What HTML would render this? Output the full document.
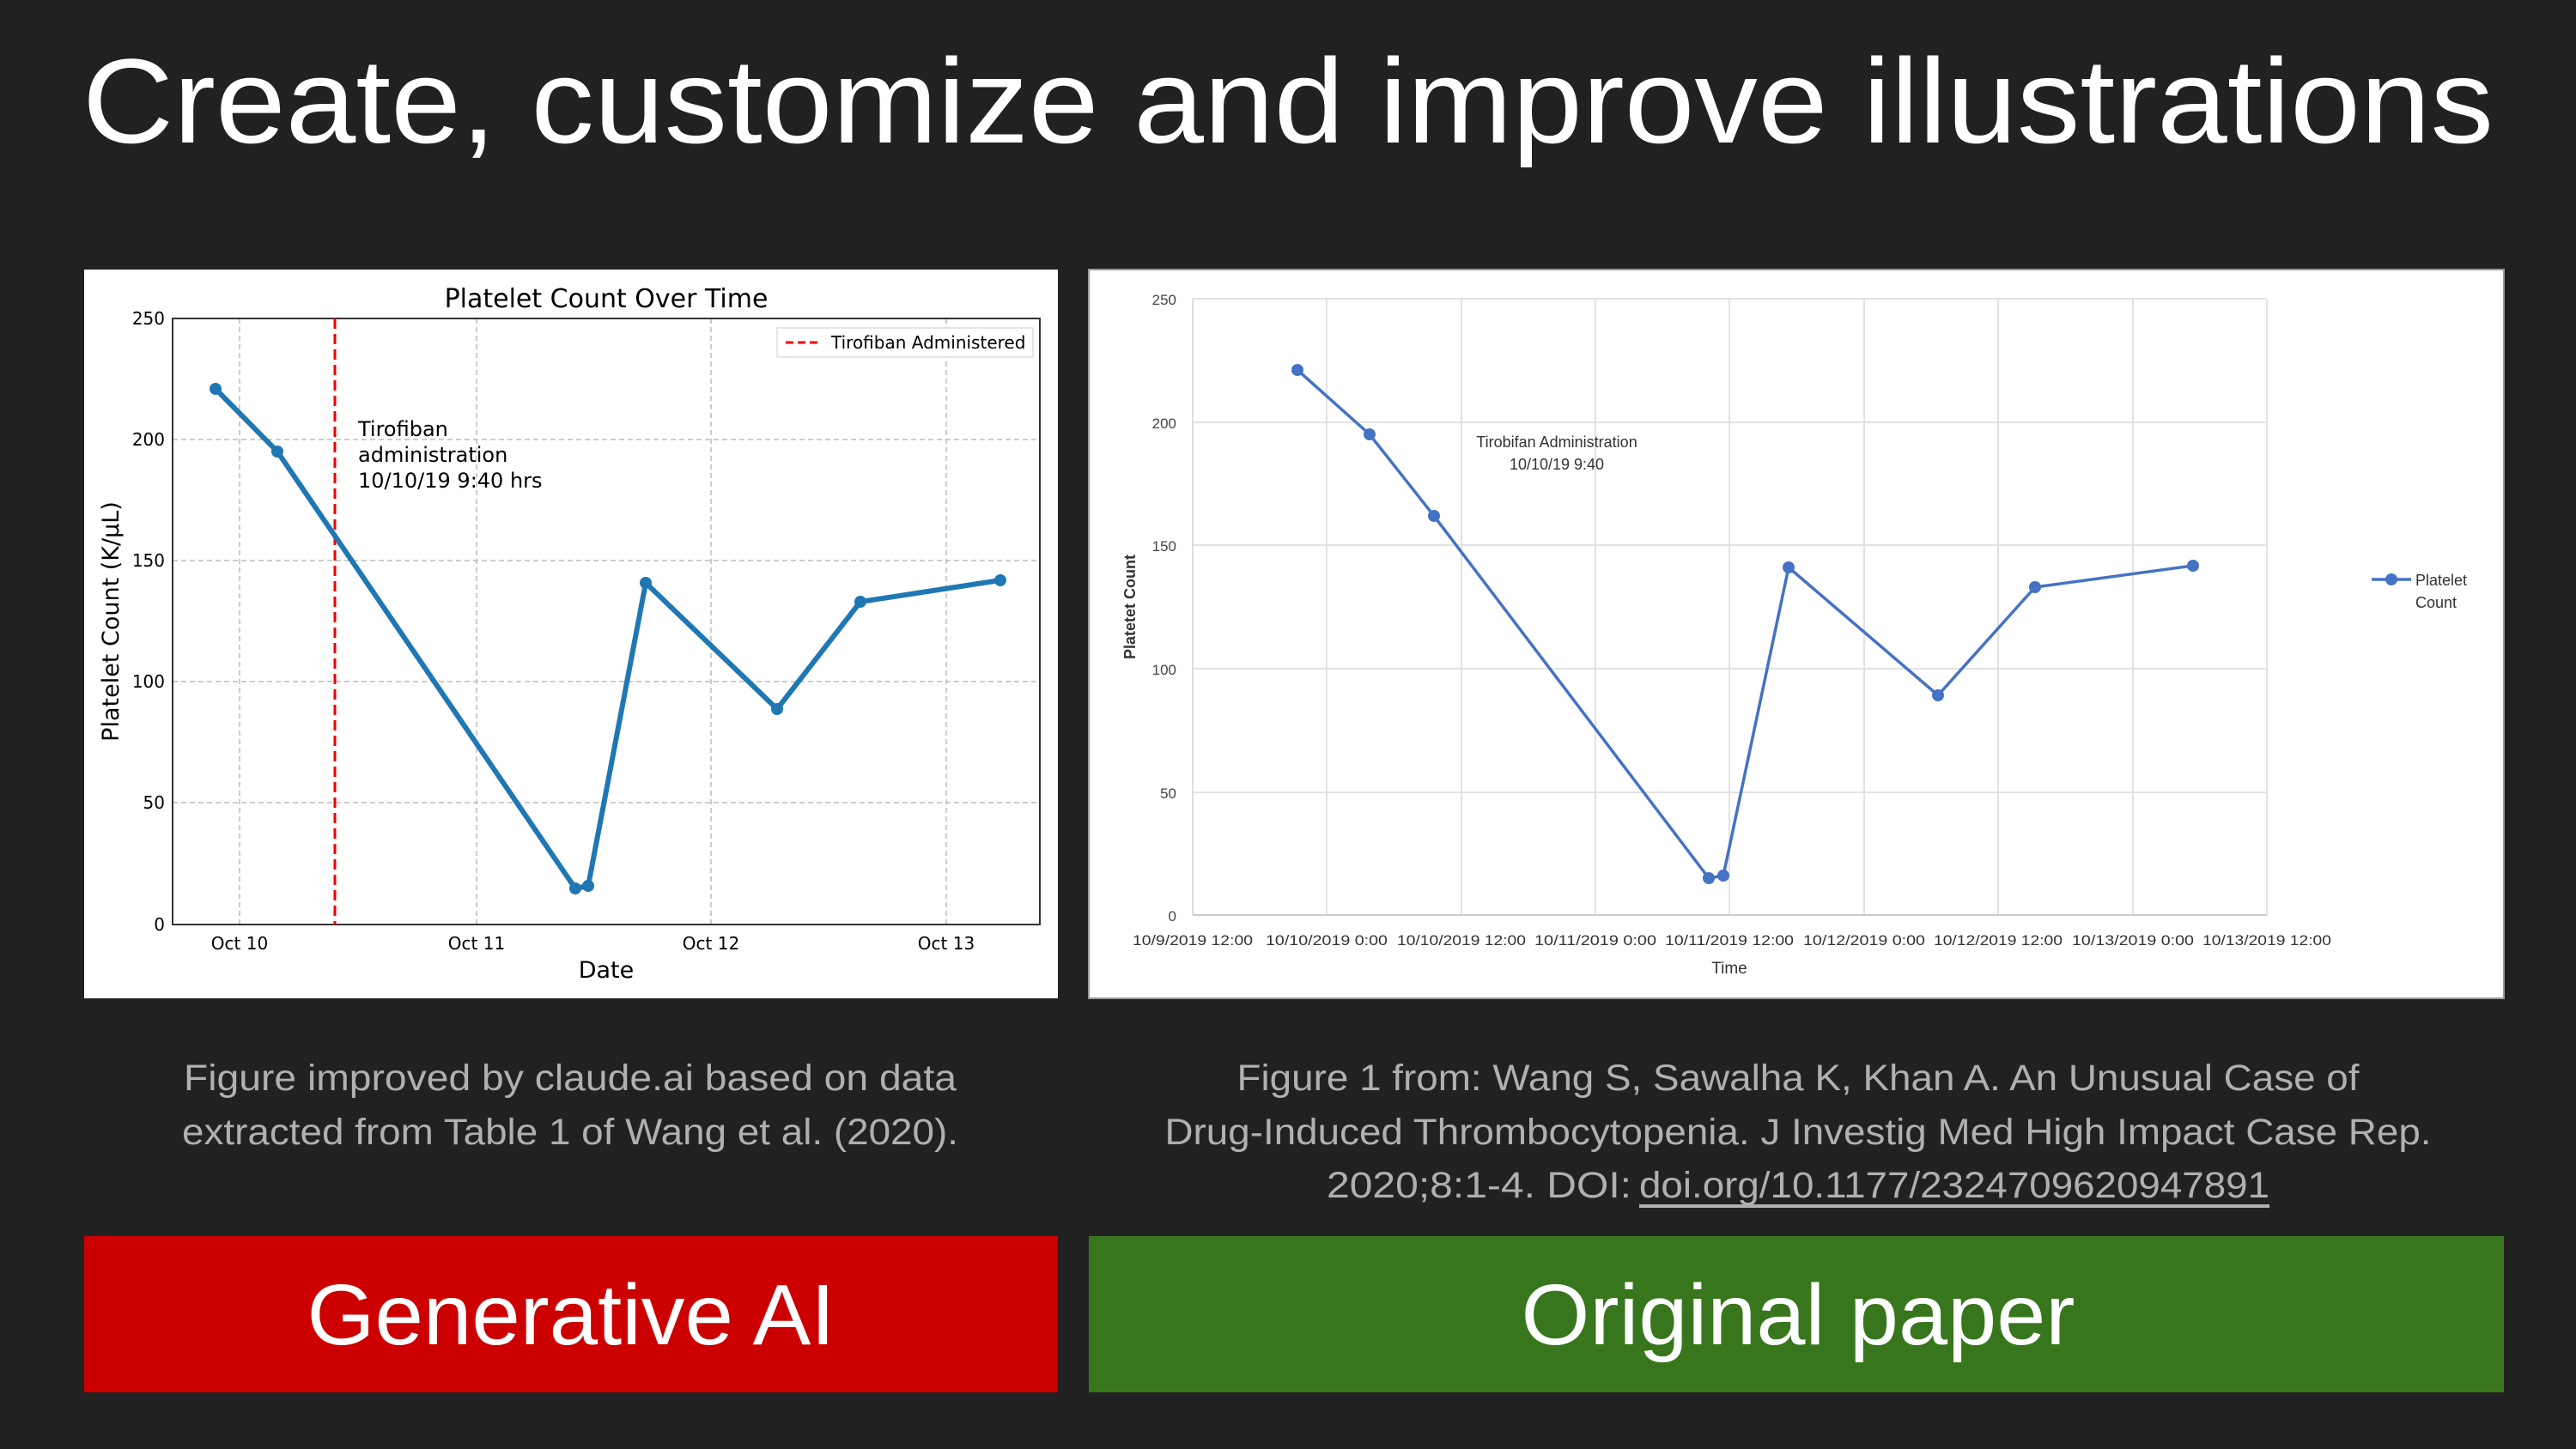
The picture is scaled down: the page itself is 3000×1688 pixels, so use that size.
<!DOCTYPE html>
<html><head><meta charset="utf-8"><style>
html,body{margin:0;padding:0;background:#212121;width:3000px;height:1688px;overflow:hidden}
svg{display:block}
</style></head><body>
<svg width="3000" height="1688" viewBox="0 0 3000 1688" xmlns="http://www.w3.org/2000/svg" font-family="Liberation Sans, sans-serif">
<rect width="3000" height="1688" fill="#212121"/>
<text x="96" y="166" font-size="140" fill="#fff" textLength="2808" lengthAdjust="spacingAndGlyphs">Create, customize and improve illustrations</text>

<!-- LEFT CHART -->
<rect x="98" y="314" width="1134" height="849" fill="#fff"/>
<g font-family="DejaVu Sans, sans-serif" fill="#000">
<text x="706" y="358" font-size="30" text-anchor="middle">Platelet Count Over Time</text>
<g stroke="#bbb" stroke-width="1.5" stroke-dasharray="6,4">
<line x1="201" y1="512" x2="1211" y2="512"/><line x1="201" y1="653" x2="1211" y2="653"/><line x1="201" y1="794" x2="1211" y2="794"/><line x1="201" y1="935" x2="1211" y2="935"/>
<line x1="279" y1="371" x2="279" y2="1077"/><line x1="555" y1="371" x2="555" y2="1077"/><line x1="828" y1="371" x2="828" y2="1077"/><line x1="1102" y1="371" x2="1102" y2="1077"/>
</g>
<rect x="201" y="371" width="1010" height="706" fill="none" stroke="#333" stroke-width="2"/>
<line x1="390" y1="371" x2="390" y2="1077" stroke="#e00" stroke-width="3" stroke-dasharray="12,6"/>
<polyline points="251,453 323,526 670,1035 685,1032 752,679 905,826 1002,701 1165,676" fill="none" stroke="#1f77b4" stroke-width="6" stroke-linejoin="round"/>
<g fill="#1f77b4"><circle cx="251" cy="453" r="7"/><circle cx="323" cy="526" r="7"/><circle cx="670" cy="1035" r="7"/><circle cx="685" cy="1032" r="7"/><circle cx="752" cy="679" r="7"/><circle cx="905" cy="826" r="7"/><circle cx="1002" cy="701" r="7"/><circle cx="1165" cy="676" r="7"/></g>
<g font-size="20" text-anchor="end"><text x="192" y="378">250</text><text x="192" y="519">200</text><text x="192" y="660">150</text><text x="192" y="801">100</text><text x="192" y="942">50</text><text x="192" y="1084">0</text></g>
<g font-size="20" text-anchor="middle"><text x="279" y="1106">Oct 10</text><text x="555" y="1106">Oct 11</text><text x="828" y="1106">Oct 12</text><text x="1102" y="1106">Oct 13</text></g>
<text x="706" y="1139" font-size="27" text-anchor="middle">Date</text>
<text transform="translate(138,724) rotate(-90)" font-size="27" text-anchor="middle">Platelet Count (K/μL)</text>
<g font-size="24"><text x="417" y="508">Tirofiban</text><text x="417" y="538">administration</text><text x="417" y="568">10/10/19 9:40 hrs</text></g>
<rect x="905" y="382" width="298" height="34" fill="#fff" stroke="#ddd" stroke-width="1.5"/>
<line x1="915" y1="399" x2="955" y2="399" stroke="#e00" stroke-width="3" stroke-dasharray="9,5"/>
<text x="968" y="406" font-size="20">Tirofiban Administered</text>
</g>

<!-- RIGHT CHART -->
<rect x="1268" y="314" width="1648" height="849" fill="#fff"/>
<rect x="1268" y="314" width="1648" height="849" fill="none" stroke="#999" stroke-width="2"/>
<g stroke="#e2e2e2" stroke-width="2">
<line x1="1389" y1="348" x2="2640" y2="348"/><line x1="1389" y1="492" x2="2640" y2="492"/><line x1="1389" y1="635" x2="2640" y2="635"/><line x1="1389" y1="779" x2="2640" y2="779"/><line x1="1389" y1="923" x2="2640" y2="923"/>
<line x1="1545" y1="348" x2="1545" y2="1066"/><line x1="1702" y1="348" x2="1702" y2="1066"/><line x1="1858" y1="348" x2="1858" y2="1066"/><line x1="2014" y1="348" x2="2014" y2="1066"/><line x1="2171" y1="348" x2="2171" y2="1066"/><line x1="2327" y1="348" x2="2327" y2="1066"/><line x1="2484" y1="348" x2="2484" y2="1066"/><line x1="2640" y1="348" x2="2640" y2="1066"/>
</g>
<line x1="1389" y1="1066" x2="2640" y2="1066" stroke="#ccc" stroke-width="2"/>
<line x1="1389" y1="348" x2="1389" y2="1066" stroke="#ddd" stroke-width="2"/>
<polyline points="1511,431 1595,506 1670,601 1990,1023 2007,1020 2083,661 2257,810 2370,684 2554,659" fill="none" stroke="#4472c4" stroke-width="3.5" stroke-linejoin="round"/>
<g fill="#4472c4"><circle cx="1511" cy="431" r="7"/><circle cx="1595" cy="506" r="7"/><circle cx="1670" cy="601" r="7"/><circle cx="1990" cy="1023" r="7"/><circle cx="2007" cy="1020" r="7"/><circle cx="2083" cy="661" r="7"/><circle cx="2257" cy="810" r="7"/><circle cx="2370" cy="684" r="7"/><circle cx="2554" cy="659" r="7"/></g>
<g font-size="17" fill="#444" text-anchor="end"><text x="1370" y="355">250</text><text x="1370" y="499">200</text><text x="1370" y="642">150</text><text x="1370" y="786">100</text><text x="1370" y="930">50</text><text x="1370" y="1073">0</text></g>
<g font-size="17" fill="#333" text-anchor="middle">
<text x="1389" y="1101" textLength="140" lengthAdjust="spacingAndGlyphs">10/9/2019 12:00</text>
<text x="1545" y="1101" textLength="142" lengthAdjust="spacingAndGlyphs">10/10/2019 0:00</text>
<text x="1702" y="1101" textLength="150" lengthAdjust="spacingAndGlyphs">10/10/2019 12:00</text>
<text x="1858" y="1101" textLength="142" lengthAdjust="spacingAndGlyphs">10/11/2019 0:00</text>
<text x="2014" y="1101" textLength="150" lengthAdjust="spacingAndGlyphs">10/11/2019 12:00</text>
<text x="2171" y="1101" textLength="142" lengthAdjust="spacingAndGlyphs">10/12/2019 0:00</text>
<text x="2327" y="1101" textLength="150" lengthAdjust="spacingAndGlyphs">10/12/2019 12:00</text>
<text x="2484" y="1101" textLength="142" lengthAdjust="spacingAndGlyphs">10/13/2019 0:00</text>
<text x="2640" y="1101" textLength="150" lengthAdjust="spacingAndGlyphs">10/13/2019 12:00</text>
</g>
<text x="2014" y="1134" font-size="19" fill="#333" text-anchor="middle">Time</text>
<text transform="translate(1322,707) rotate(-90)" font-size="18" fill="#333" font-weight="bold" text-anchor="middle">Platetet Count</text>
<g font-size="18" fill="#333" text-anchor="middle"><text x="1813" y="521">Tirobifan Administration</text><text x="1813" y="547">10/10/19  9:40</text></g>
<line x1="2762" y1="675" x2="2808" y2="675" stroke="#4472c4" stroke-width="3.5"/><circle cx="2785" cy="675" r="7" fill="#4472c4"/>
<text x="2813" y="682" font-size="18" fill="#333">Platelet</text><text x="2813" y="708" font-size="18" fill="#333">Count</text>

<!-- CAPTIONS -->
<g font-size="43" fill="#b0b0b0" text-anchor="middle">
<text x="664" y="1270" textLength="900" lengthAdjust="spacingAndGlyphs">Figure improved by claude.ai based on data</text>
<text x="664" y="1333" textLength="904" lengthAdjust="spacingAndGlyphs">extracted from Table 1 of Wang et al. (2020).</text>
<text x="2094" y="1270" textLength="1307" lengthAdjust="spacingAndGlyphs">Figure 1 from: Wang S, Sawalha K, Khan A. An Unusual Case of</text>
<text x="2094" y="1333" textLength="1475" lengthAdjust="spacingAndGlyphs">Drug-Induced Thrombocytopenia. J Investig Med High Impact Case Rep.</text>
<text x="1545" y="1395" text-anchor="start" textLength="355" lengthAdjust="spacingAndGlyphs">2020;8:1-4. DOI:</text>
<text x="1909" y="1395" text-anchor="start" textLength="734" lengthAdjust="spacingAndGlyphs">doi.org/10.1177/2324709620947891</text>
</g>
<rect x="1909" y="1403" width="734" height="4" fill="#b0b0b0"/>

<!-- BUTTONS -->
<rect x="98" y="1440" width="1134" height="182" fill="#cc0000"/>
<rect x="1268" y="1440" width="1648" height="182" fill="#38761d"/>
<text x="665" y="1566" font-size="100" fill="#fff" text-anchor="middle" textLength="615" lengthAdjust="spacingAndGlyphs">Generative AI</text>
<text x="2094" y="1566" font-size="100" fill="#fff" text-anchor="middle" textLength="645" lengthAdjust="spacingAndGlyphs">Original paper</text>
</svg>
</body></html>
